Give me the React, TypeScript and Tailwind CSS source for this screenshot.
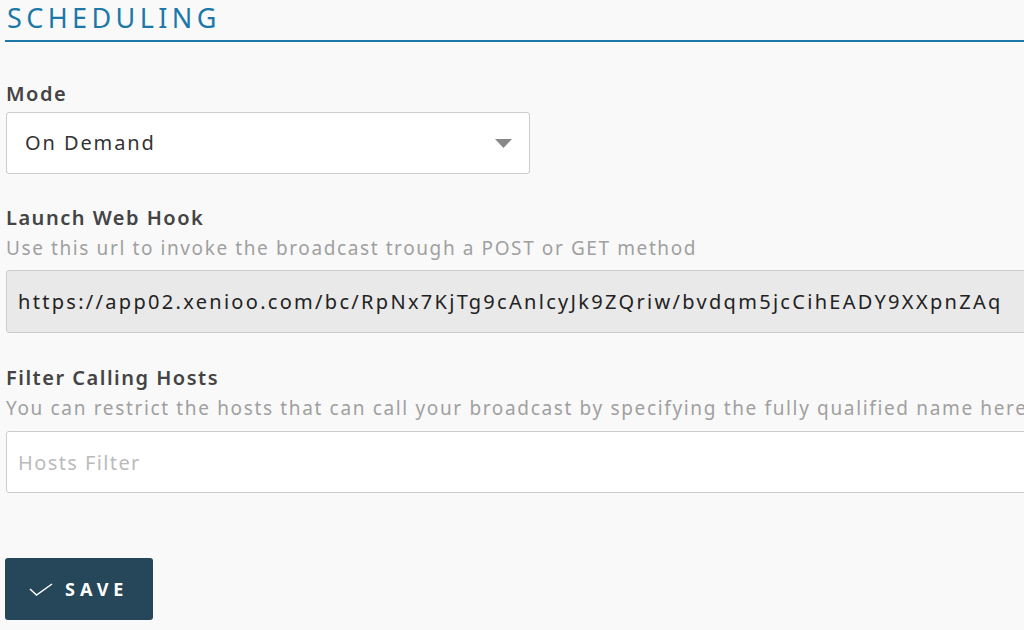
const font = { fontFamily: '"Noto Sans", "Open Sans", sans-serif' };

const labelCls = "h-6 text-[20px] leading-6 font-semibold tracking-[1.5px] text-[#444]";
const hintCls = "mt-[6px] h-6 text-[19px] leading-6 tracking-[1.6px] text-[#a0a0a0] whitespace-nowrap";
const boxCls = "flex items-center rounded-[3px] border border-[#cccccc] text-[20px] whitespace-nowrap";

export default function App() {
  return (
    <div className="h-[630px] w-[1024px] overflow-hidden bg-[#f9f9f9]" style={font}>
      <div className="ml-[5px] flex h-[42px] items-start border-b-2 border-[#1b78a8]">
        <h2 className="ml-[2px] mt-[2px] text-[27px] leading-8 font-normal tracking-[4.4px] text-[#1b78a8]">
          SCHEDULING
        </h2>
      </div>

      <div className="pl-[6px]">
        <div className={`${labelCls} mt-[40px]`}>Mode</div>
        <div className={`${boxCls} mt-[6px] h-[62px] w-[524px] justify-between bg-white pl-[18px] pr-[17px] tracking-[1.9px] text-[#333]`}>
          <span>On Demand</span>
          <svg width="17" height="9" viewBox="0 0 17 9">
            <path d="M0 0h17L8.5 9z" fill="#888" />
          </svg>
        </div>

        <div className={`${labelCls} mt-[32px]`}>Launch Web Hook</div>
        <div className={hintCls}>Use this url to invoke the broadcast trough a POST or GET method</div>
        <div className={`${boxCls} mt-[10px] h-[63px] w-[1060px] bg-[#e9e9e9] pl-[11px] tracking-[2.3px] text-[#222]`}>
          https://app02.xenioo.com/bc/RpNx7KjTg9cAnlcyJk9ZQriw/bvdqm5jcCihEADY9XXpnZAq
        </div>

        <div className={`${labelCls} mt-[33px]`}>Filter Calling Hosts</div>
        <div className={`${hintCls} tracking-[1.65px]`}>
          You can restrict the hosts that can call your broadcast by specifying the fully qualified name here (comma separated)
        </div>
        <input
          placeholder="Hosts Filter"
          className={`${boxCls} mt-[11px] h-[62px] w-[1060px] bg-white pl-[11px] tracking-[1.4px] text-[#333] outline-none placeholder:text-[#bbb]`}
        />

        <button
          type="button"
          className="mt-[65px] -ml-px flex h-[62px] w-[148px] items-center gap-[12px] rounded-[3px] bg-[#264659] pl-[24px] text-[18px] font-bold tracking-[5px] text-white"
        >
          <svg width="24" height="13" viewBox="0 0 24 13" fill="none" stroke="currentColor" strokeWidth="1.5">
            <polyline points="1,6 7.5,12 23,1" />
          </svg>
          SAVE
        </button>
      </div>
    </div>
  );
}
